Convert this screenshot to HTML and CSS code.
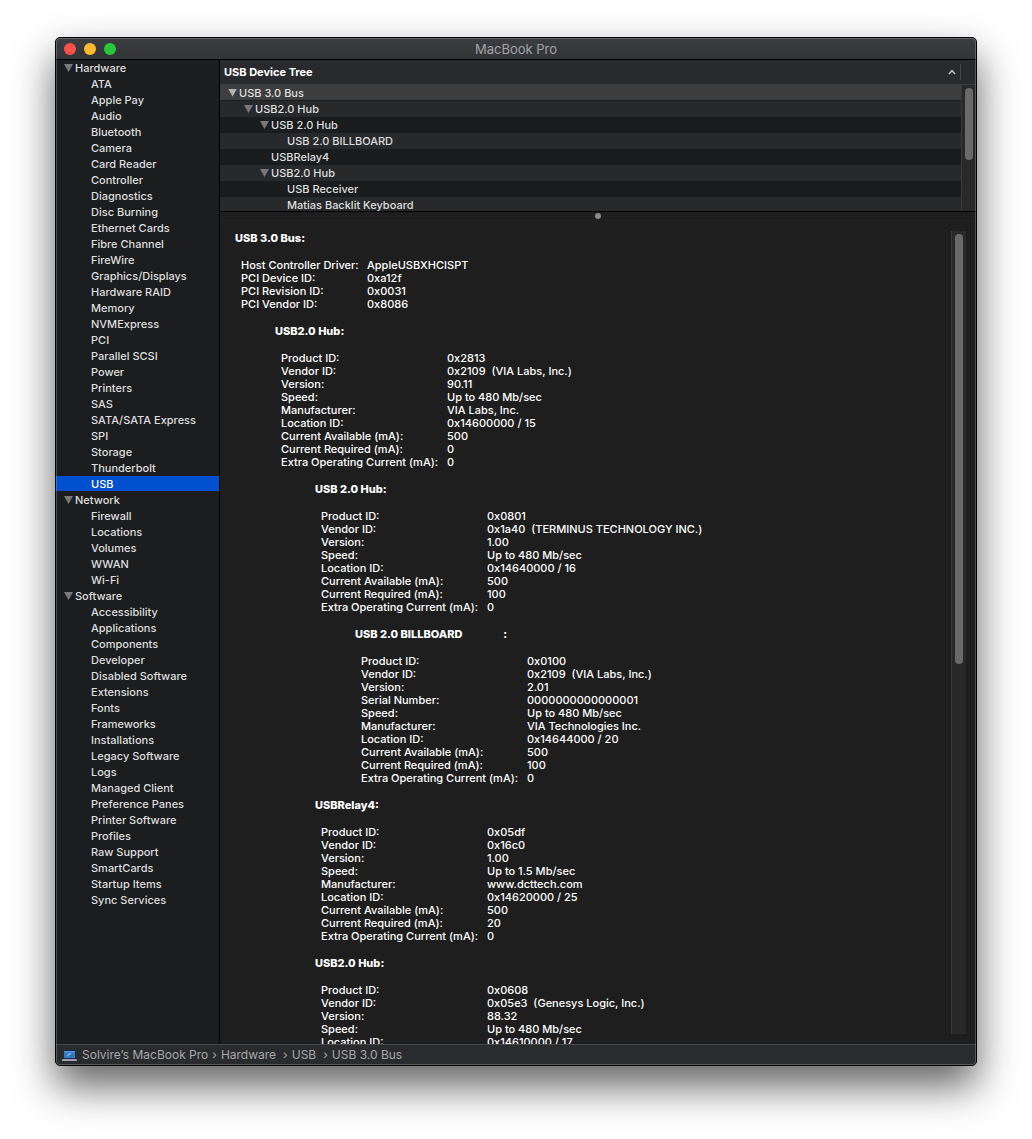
FILE: index.html
```
<!DOCTYPE html>
<html lang="en">
<head>
<meta charset="utf-8">
<meta name="viewport" content="width=device-width, initial-scale=1">
<title>MacBook Pro</title>
<link rel="stylesheet" href="styles.css">
</head>
<body>
<div class="window">
  <header class="titlebar">
    <div class="lights">
      <button class="light close" aria-label="Close"></button>
      <button class="light minimize" aria-label="Minimize"></button>
      <button class="light zoom" aria-label="Zoom"></button>
    </div>
    <h1 class="title">MacBook Pro</h1>
  </header>

  <div class="body">
    <nav class="sidebar" aria-label="Categories">
      <button class="group"><span class="triangle"></span>Hardware</button>
      <ul class="items">
        <li><a href="#">ATA</a></li>
        <li><a href="#">Apple Pay</a></li>
        <li><a href="#">Audio</a></li>
        <li><a href="#">Bluetooth</a></li>
        <li><a href="#">Camera</a></li>
        <li><a href="#">Card Reader</a></li>
        <li><a href="#">Controller</a></li>
        <li><a href="#">Diagnostics</a></li>
        <li><a href="#">Disc Burning</a></li>
        <li><a href="#">Ethernet Cards</a></li>
        <li><a href="#">Fibre Channel</a></li>
        <li><a href="#">FireWire</a></li>
        <li><a href="#">Graphics/Displays</a></li>
        <li><a href="#">Hardware RAID</a></li>
        <li><a href="#">Memory</a></li>
        <li><a href="#">NVMExpress</a></li>
        <li><a href="#">PCI</a></li>
        <li><a href="#">Parallel SCSI</a></li>
        <li><a href="#">Power</a></li>
        <li><a href="#">Printers</a></li>
        <li><a href="#">SAS</a></li>
        <li><a href="#">SATA/SATA Express</a></li>
        <li><a href="#">SPI</a></li>
        <li><a href="#">Storage</a></li>
        <li><a href="#">Thunderbolt</a></li>
        <li><a href="#" class="selected" aria-current="page">USB</a></li>
      </ul>
      <button class="group"><span class="triangle"></span>Network</button>
      <ul class="items">
        <li><a href="#">Firewall</a></li>
        <li><a href="#">Locations</a></li>
        <li><a href="#">Volumes</a></li>
        <li><a href="#">WWAN</a></li>
        <li><a href="#">Wi-Fi</a></li>
      </ul>
      <button class="group"><span class="triangle"></span>Software</button>
      <ul class="items">
        <li><a href="#">Accessibility</a></li>
        <li><a href="#">Applications</a></li>
        <li><a href="#">Components</a></li>
        <li><a href="#">Developer</a></li>
        <li><a href="#">Disabled Software</a></li>
        <li><a href="#">Extensions</a></li>
        <li><a href="#">Fonts</a></li>
        <li><a href="#">Frameworks</a></li>
        <li><a href="#">Installations</a></li>
        <li><a href="#">Legacy Software</a></li>
        <li><a href="#">Logs</a></li>
        <li><a href="#">Managed Client</a></li>
        <li><a href="#">Preference Panes</a></li>
        <li><a href="#">Printer Software</a></li>
        <li><a href="#">Profiles</a></li>
        <li><a href="#">Raw Support</a></li>
        <li><a href="#">SmartCards</a></li>
        <li><a href="#">Startup Items</a></li>
        <li><a href="#">Sync Services</a></li>
      </ul>
    </nav>

    <main class="content">
      <div class="tree-header">
        <button class="sort">USB Device Tree
          <svg class="caret" viewBox="0 0 8 6" aria-hidden="true"><path d="M1 5 4 1.6 7 5"/></svg>
        </button>
      </div>
      <div class="tree">
        <ul class="rows" role="tree">
          <li class="row level-0 current" role="treeitem"><button class="triangle" aria-label="Collapse USB 3.0 Bus"></button>USB 3.0 Bus</li>
          <li class="row level-1" role="treeitem"><button class="triangle" aria-label="Collapse USB2.0 Hub"></button>USB2.0 Hub</li>
          <li class="row level-2" role="treeitem"><button class="triangle" aria-label="Collapse USB 2.0 Hub"></button>USB 2.0 Hub</li>
          <li class="row level-3 leaf" role="treeitem">USB 2.0 BILLBOARD</li>
          <li class="row level-2 leaf" role="treeitem">USBRelay4</li>
          <li class="row level-2" role="treeitem"><button class="triangle" aria-label="Collapse USB2.0 Hub"></button>USB2.0 Hub</li>
          <li class="row level-3 leaf" role="treeitem">USB Receiver</li>
          <li class="row level-3 leaf" role="treeitem">Matias Backlit Keyboard</li>
        </ul>
        <div class="track tree-track"><div class="thumb"></div></div>
      </div>
      <div class="splitter"><span class="grip"></span></div>

      <div class="detail">
        <div class="report">
          <section class="device">
            <h2>USB 3.0 Bus:</h2>
            <table class="props bus">
              <tr><th scope="row">Host Controller Driver:</th><td>AppleUSBXHCISPT</td></tr>
              <tr><th scope="row">PCI Device ID:</th><td>0xa12f</td></tr>
              <tr><th scope="row">PCI Revision ID:</th><td>0x0031</td></tr>
              <tr><th scope="row">PCI Vendor ID:</th><td>0x8086</td></tr>
            </table>
            <section class="device">
              <h2>USB2.0 Hub:</h2>
              <table class="props">
                <tr><th scope="row">Product ID:</th><td>0x2813</td></tr>
                <tr><th scope="row">Vendor ID:</th><td>0x2109  (VIA Labs, Inc.)</td></tr>
                <tr><th scope="row">Version:</th><td>90.11</td></tr>
                <tr><th scope="row">Speed:</th><td>Up to 480 Mb/sec</td></tr>
                <tr><th scope="row">Manufacturer:</th><td>VIA Labs, Inc.</td></tr>
                <tr><th scope="row">Location ID:</th><td>0x14600000 / 15</td></tr>
                <tr><th scope="row">Current Available (mA):</th><td>500</td></tr>
                <tr><th scope="row">Current Required (mA):</th><td>0</td></tr>
                <tr><th scope="row">Extra Operating Current (mA):</th><td>0</td></tr>
              </table>
              <section class="device">
                <h2>USB 2.0 Hub:</h2>
                <table class="props">
                  <tr><th scope="row">Product ID:</th><td>0x0801</td></tr>
                  <tr><th scope="row">Vendor ID:</th><td>0x1a40  (TERMINUS TECHNOLOGY INC.)</td></tr>
                  <tr><th scope="row">Version:</th><td>1.00</td></tr>
                  <tr><th scope="row">Speed:</th><td>Up to 480 Mb/sec</td></tr>
                  <tr><th scope="row">Location ID:</th><td>0x14640000 / 16</td></tr>
                  <tr><th scope="row">Current Available (mA):</th><td>500</td></tr>
                  <tr><th scope="row">Current Required (mA):</th><td>100</td></tr>
                  <tr><th scope="row">Extra Operating Current (mA):</th><td>0</td></tr>
                </table>
                <section class="device">
                  <h2>USB 2.0 BILLBOARD                 :</h2>
                  <table class="props">
                    <tr><th scope="row">Product ID:</th><td>0x0100</td></tr>
                    <tr><th scope="row">Vendor ID:</th><td>0x2109  (VIA Labs, Inc.)</td></tr>
                    <tr><th scope="row">Version:</th><td>2.01</td></tr>
                    <tr><th scope="row">Serial Number:</th><td>0000000000000001</td></tr>
                    <tr><th scope="row">Speed:</th><td>Up to 480 Mb/sec</td></tr>
                    <tr><th scope="row">Manufacturer:</th><td>VIA Technologies Inc.</td></tr>
                    <tr><th scope="row">Location ID:</th><td>0x14644000 / 20</td></tr>
                    <tr><th scope="row">Current Available (mA):</th><td>500</td></tr>
                    <tr><th scope="row">Current Required (mA):</th><td>100</td></tr>
                    <tr><th scope="row">Extra Operating Current (mA):</th><td>0</td></tr>
                  </table>
                </section>
              </section>
              <section class="device">
                <h2>USBRelay4:</h2>
                <table class="props">
                  <tr><th scope="row">Product ID:</th><td>0x05df</td></tr>
                  <tr><th scope="row">Vendor ID:</th><td>0x16c0</td></tr>
                  <tr><th scope="row">Version:</th><td>1.00</td></tr>
                  <tr><th scope="row">Speed:</th><td>Up to 1.5 Mb/sec</td></tr>
                  <tr><th scope="row">Manufacturer:</th><td>www.dcttech.com</td></tr>
                  <tr><th scope="row">Location ID:</th><td>0x14620000 / 25</td></tr>
                  <tr><th scope="row">Current Available (mA):</th><td>500</td></tr>
                  <tr><th scope="row">Current Required (mA):</th><td>20</td></tr>
                  <tr><th scope="row">Extra Operating Current (mA):</th><td>0</td></tr>
                </table>
              </section>
              <section class="device">
                <h2>USB2.0 Hub:</h2>
                <table class="props">
                  <tr><th scope="row">Product ID:</th><td>0x0608</td></tr>
                  <tr><th scope="row">Vendor ID:</th><td>0x05e3  (Genesys Logic, Inc.)</td></tr>
                  <tr><th scope="row">Version:</th><td>88.32</td></tr>
                  <tr><th scope="row">Speed:</th><td>Up to 480 Mb/sec</td></tr>
                  <tr><th scope="row">Location ID:</th><td>0x14610000 / 17</td></tr>
                </table>
              </section>
            </section>
          </section>
        </div>
        <div class="track detail-track"><div class="thumb"></div></div>
      </div>
    </main>
  </div>

  <footer class="pathbar">
    <svg class="laptop" viewBox="0 0 15 11" aria-hidden="true">
      <rect x="1" y="0" width="13" height="9" rx="1" fill="#1a2b48"/>
      <rect x="2" y="1" width="11" height="7" fill="#3a7cc2"/>
      <path d="M2 1h11v1H2z" fill="#5b9bd8"/>
      <path d="M5 6.500c0-3 2.500-4 5-3.500-1 .5-1 1.500-2.500 2C6.500 5.400 6 6 5 6.500z" fill="#79b4e6"/>
      <path d="M8 6.500 10.500 4 11 6z" fill="#2861a6"/>
      <path d="M1 9h13l1 1v1H0v-1z" fill="#a19dba"/>
    </svg>
    <span>Solvire’s MacBook Pro</span><span class="sep">›</span>
    <span>Hardware</span><span class="sep wide">›</span>
    <span>USB</span><span class="sep wide">›</span>
    <span>USB 3.0 Bus</span>
  </footer>
</div>
</body>
</html>
```
FILE: styles.css
```
* {
  box-sizing: border-box;
}

body {
  margin: 0;
  height: 100vh;
  padding: 37px 55px 73px;
  display: flex;
  background: #fff;
  font: 500 11px/16px Inter, "Liberation Sans", sans-serif;
  color: #dededf;
}

button {
  margin: 0;
  padding: 0;
  border: 0;
  background: none;
  color: inherit;
  font: inherit;
  text-align: left;
}

ul {
  margin: 0;
  padding: 0;
  list-style: none;
}

a {
  color: inherit;
  text-decoration: none;
}

.window {
  position: relative;
  flex: 1;
  min-width: 0;
  display: flex;
  flex-direction: column;
  overflow: hidden;
  border: 1px solid #000;
  border-radius: 5px;
  background: #1e1e1e;
  box-shadow: 0 20px 40px rgba(0, 0, 0, 0.62);
}

/* Light hairline inside the window frame */
.window::after {
  content: "";
  position: absolute;
  inset: 0;
  border-radius: 4px;
  box-shadow: inset 0 0 0 1px rgba(255, 255, 255, 0.22);
  pointer-events: none;
}

.titlebar {
  flex: none;
  height: 22px;
  display: grid;
  grid-template-columns: 1fr auto 1fr;
  align-items: center;
  padding: 0 8px;
  border-bottom: 1px solid #000;
  background: linear-gradient(#3c3d41, #333438);
}

.lights {
  display: flex;
  gap: 8px;
}

.light {
  width: 12px;
  height: 12px;
  border-radius: 50%;
}

.close { background: #ff5149; }
.minimize { background: #fdb82c; }
.zoom { background: #28c83c; }

.title {
  margin: 0;
  font-size: 13px;
  font-weight: 400;
  color: #a3a4a6;
}

.body {
  flex: 1;
  min-height: 0;
  display: flex;
}

.sidebar {
  flex: none;
  width: 164px;
  overflow: hidden;
  border-right: 1px solid #000;
  background: #1c1d1f;
}

.group {
  display: flex;
  align-items: center;
  gap: 2px;
  width: 100%;
  height: 16px;
  padding-left: 8px;
}

.triangle {
  flex: none;
  width: 9px;
  height: 8px;
  background: #77787a;
  clip-path: polygon(0 0, 100% 0, 50% 100%);
}

.items a {
  display: block;
  height: 16px;
  padding-left: 35px;
}

.items .selected {
  color: #fff;
  background: linear-gradient(#0050cf, #0050cf) no-repeat 0 0 / 100% 15px;
}

.content {
  flex: 1;
  min-width: 0;
  display: flex;
  flex-direction: column;
}

.tree-header {
  flex: none;
  height: 25px;
  padding: 4px 15px 4px 4px;
  border-bottom: 1px solid #3c3d3f;
  background: #292a2d;
}

.sort {
  display: flex;
  align-items: center;
  justify-content: space-between;
  width: 100%;
  height: 16px;
  padding-right: 4px;
  border-right: 1px solid #47484a;
  font-weight: 700;
  color: #fff;
}

.caret {
  width: 8px;
  height: 6px;
  fill: none;
  stroke: #c8c8c9;
  stroke-width: 1.4;
}

.tree {
  flex: none;
  height: 126px;
  display: flex;
  overflow: hidden;
}

.rows {
  flex: 1;
}

.row {
  display: flex;
  align-items: center;
  gap: 2px;
  height: 16px;
  padding-left: 8px;
  background: #1b1c1e;
}

.row:nth-child(even) { background: #28292b; }

.row.current {
  background: #3e3e3e;
  border-bottom: 1px solid #1b1c1e;
}

.current .triangle { background: #b4b4b4; }

.level-1 { padding-left: 24px; }
.level-2 { padding-left: 40px; }
.level-2.leaf { padding-left: 51px; }
.level-3.leaf { padding-left: 67px; }

.track {
  flex: none;
  width: 15px;
  padding: 3px;
  border-left: 1px solid #3a3a3a;
  background: #292929;
}

.thumb {
  width: 8px;
  border-radius: 4px;
  background: #6a6a6a;
}

.tree-track .thumb { height: 60%; }

.splitter {
  flex: none;
  height: 10px;
  display: flex;
  align-items: center;
  justify-content: center;
  border-top: 1px solid #000;
  border-bottom: 1px solid #222;
}

.grip {
  width: 6px;
  height: 6px;
  border-radius: 50%;
  background: #8c8c8c;
}

.detail {
  flex: 1;
  min-height: 0;
  display: flex;
}

.report {
  flex: 1;
  min-width: 0;
  overflow: hidden;
  padding: 11px 15px 0;
  line-height: 13px;
  color: #fff;
}

.detail-track { margin: 10px 10px 10px 0; }
.detail-track .thumb { height: 54%; }

.device h2 {
  margin: 0 0 14px;
  font-size: 11px;
  font-weight: 800;
  line-height: 13px;
  white-space: pre;
}

.device .device {
  margin: 14px 0 0 40px;
}

.props {
  margin-left: 6px;
  border-collapse: collapse;
}

.props th,
.props td {
  height: 13px;
  padding: 0;
  font-weight: 500;
  text-align: left;
  white-space: pre;
}

.props th { min-width: 166px; }
.bus th { min-width: 126px; }

.pathbar {
  flex: none;
  height: 21px;
  display: flex;
  align-items: center;
  padding: 0 6px;
  border-top: 1px solid #47484a;
  background: #2a2b2d;
  font-size: 12px;
  font-weight: 400;
  color: #a8a8a9;
  white-space: nowrap;
}

.laptop {
  width: 15px;
  height: 11px;
  margin-right: 5px;
}

.sep { margin: 0 4px; }
.sep.wide { margin-left: 7px; }
```
